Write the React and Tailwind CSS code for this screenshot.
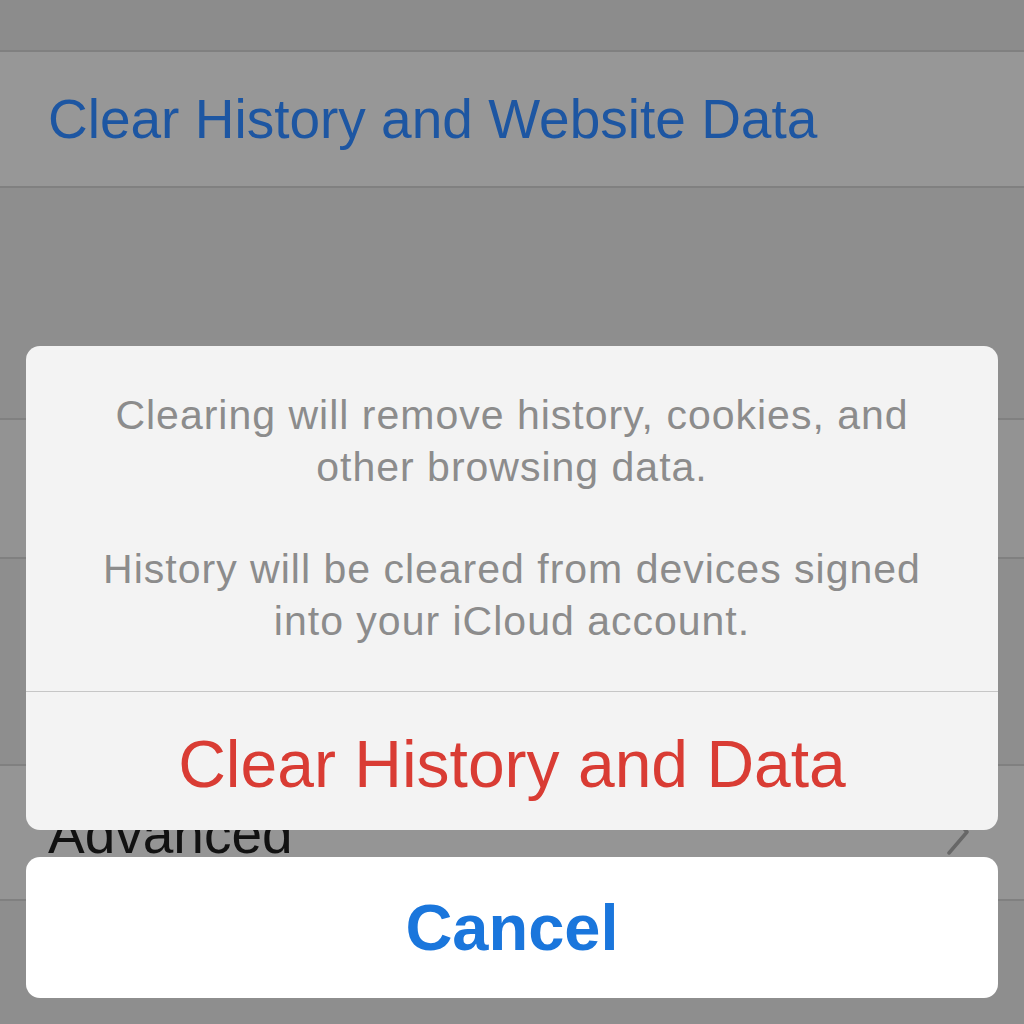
export default function App() {
  const font = { fontFamily: '"Liberation Sans", Arial, sans-serif' };
  return (
    <div className="relative w-[1024px] h-[1024px] overflow-hidden bg-[#8e8e8e]" style={font}>
      {/* background settings list */}
      <div className="flex flex-col">
        <div className="h-[50px] bg-[#8c8c8c]" />
        <div className="h-[2px] bg-[#808080]" />
        <div className="h-[134px] bg-[#979797] flex items-center pl-[48px]">
          <span className="text-[55px] leading-none text-[#1d56a2]">Clear History and Website Data</span>
        </div>
        <div className="h-[2px] bg-[#808080]" />
        <div className="h-[230px] bg-[#8e8e8e]" />
        <div className="h-[2px] bg-[#808080]" />
        <div className="h-[137px] bg-[#939393]" />
        <div className="h-[2px] bg-[#808080]" />
        <div className="h-[205px] bg-[#8e8e8e]" />
        <div className="h-[2px] bg-[#808080]" />
        <div className="h-[133px] bg-[#959595] flex items-center justify-between pl-[48px] pr-[54px] pt-[4px]">
          <span className="text-[55px] leading-none text-[#111]">Advanced</span>
          <svg width="24" height="46" viewBox="0 0 24 46" className="mt-[-6px]">
            <path d="M3 2 L21 23 L3 44" fill="none" stroke="#676767" strokeWidth="3.5" strokeLinecap="round" strokeLinejoin="round" />
          </svg>
        </div>
        <div className="h-[2px] bg-[#808080]" />
      </div>

      {/* action sheet overlay */}
      <div className="absolute inset-0 flex flex-col px-[26px] pt-[346px]">
        <div className="h-[484px] rounded-[14px] bg-[#f3f3f3] flex flex-col overflow-hidden">
          <div className="h-[345px] pt-[43px] flex flex-col items-center text-center text-[41px] leading-[52px] tracking-[1px] text-[#8c8c8c]">
            <p>Clearing will remove history, cookies, and</p>
            <p>other browsing data.</p>
            <p className="mt-[50px]">History will be cleared from devices signed</p>
            <p>into your iCloud account.</p>
          </div>
          <div className="h-[1px] bg-[#c6c6c6]" />
          <div className="flex-1 flex items-center justify-center pt-[6px]">
            <span className="text-[66px] leading-none text-[#d93c34]">Clear History and Data</span>
          </div>
        </div>
        <div className="mt-[27px] h-[141px] rounded-[14px] bg-white flex items-center justify-center">
          <span className="text-[65px] leading-none font-bold text-[#1a76dc]">Cancel</span>
        </div>
      </div>
    </div>
  );
}
